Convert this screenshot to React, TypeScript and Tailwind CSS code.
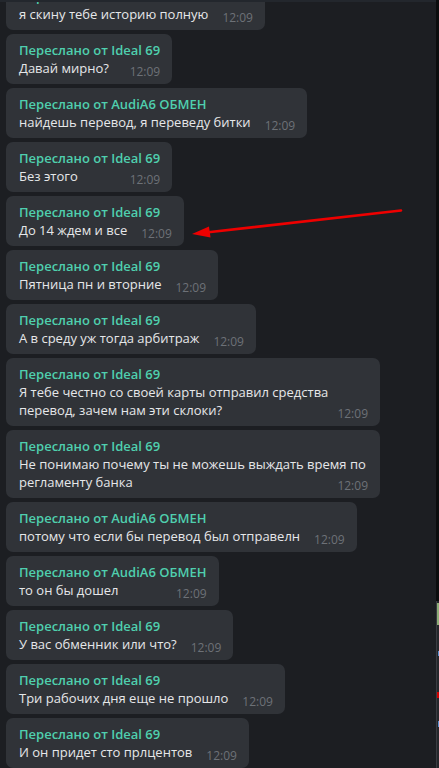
import React from "react";

type Msg = { name: string; text: string };

const I = "Ideal 69";
const A = "AudiA6 ОБМЕН";

const msgs: Msg[] = [
  { name: I, text: "я скину тебе историю полную" },
  { name: I, text: "Давай мирно?" },
  { name: A, text: "найдешь перевод, я переведу битки" },
  { name: I, text: "Без этого" },
  { name: I, text: "До 14 ждем и все" },
  { name: I, text: "Пятница пн и вторние" },
  { name: I, text: "А в среду уж тогда арбитраж" },
  { name: I, text: "Я тебе честно со своей карты отправил средства перевод, зачем нам эти склоки?" },
  { name: I, text: "Не понимаю почему ты не можешь выждать время по регламенту банка" },
  { name: A, text: "потому что если бы перевод был отправелн" },
  { name: A, text: "то он бы дошел" },
  { name: I, text: "У вас обменник или что?" },
  { name: I, text: "Три рабочих дня еще не прошло" },
  { name: I, text: "И он придет сто прлцентов" },
];

function Bubble({ m }: { m: Msg }) {
  return (
    <div className="max-w-[374px] rounded-[7px] bg-[#303338] pl-[13px] pr-[12px] pt-[8px] pb-[3px]">
      <div className="text-[13px] font-semibold leading-[17px] text-[#4fcfae] whitespace-nowrap">
        Переслано от {m.name}
      </div>
      <div className="text-[13px] leading-[18px] text-[#e6e7e9]">
        {m.text}
        <span className="float-right ml-[14px] mt-[4px] text-[12px] leading-[18px] text-[#6d7177]">12:09</span>
      </div>
    </div>
  );
}

export default function App() {
  return (
    <div
      className="flex h-[768px] w-[439px] overflow-hidden bg-[#1c1e22]"
      style={{ fontFamily: '"Open Sans", "Noto Sans", sans-serif' }}
    >
      <div className="relative flex-1 overflow-hidden">
        <div className="-mt-[20px] flex flex-col items-start gap-[4px] pl-[6px]">
          {msgs.map((m, i) => (
            <Bubble key={i} m={m} />
          ))}
        </div>
        <div className="absolute left-0 right-0 top-0 h-[2px] bg-[#23272d]" />
        <svg className="pointer-events-none absolute left-0 top-0" width="436" height="768">
          <line x1="401" y1="210.5" x2="206" y2="232.5" stroke="#ee0000" strokeWidth="2.6" strokeLinecap="round" />
          <polygon points="192,234 210.5,237.5 209,226.5" fill="#ee0000" />
        </svg>
      </div>
      <div className="flex w-[3px] flex-col">
        <div className="h-[601px] bg-[#0c0d0e]" />
        <div className="flex flex-1 flex-col border-l border-[#3a3d42] bg-[#25272b]">
          <div className="mt-[2px] h-[22px] bg-[#8fae78]" />
          <div className="mt-[26px] ml-[1px] h-[5px] bg-[#5b8fd0]" />
          <div className="mt-[36px] h-[6px] bg-[#d00000]" />
          <div className="mt-[23px] ml-[1px] h-[6px] bg-[#5b8fd0]" />
        </div>
      </div>
    </div>
  );
}
